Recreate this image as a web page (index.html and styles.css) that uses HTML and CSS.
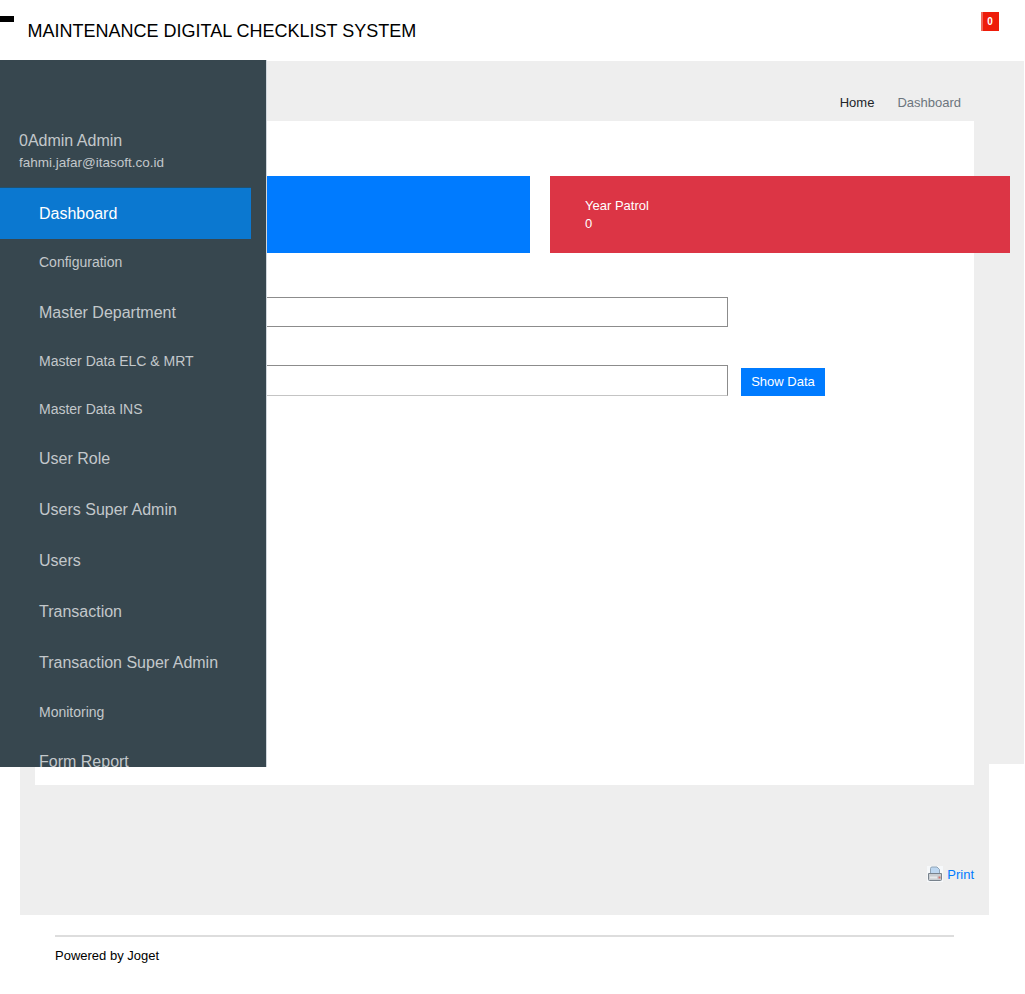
FILE: index.html
```html
<!DOCTYPE html>
<html lang="en">
<head>
<meta charset="utf-8">
<title>Maintenance Digital Checklist System</title>
<link rel="stylesheet" href="styles.css">
</head>
<body>
<header class="topbar">
  <span class="toggle"></span>
  <h1 class="brand">MAINTENANCE DIGITAL CHECKLIST SYSTEM</h1>
  <span class="badge">0</span>
</header>
<div class="stage">
  <div class="backdrop"></div>
  <aside class="sidebar">
    <div class="user">
      <div class="user-name">0Admin Admin</div>
      <div class="user-mail">fahmi.jafar@itasoft.co.id</div>
    </div>
    <nav class="menu">
      <a class="item active">Dashboard</a>
      <a class="item small">Configuration</a>
      <a class="item nudge">Master Department</a>
      <a class="item small">Master Data ELC &amp; MRT</a>
      <a class="item small">Master Data INS</a>
      <a class="item">User Role</a>
      <a class="item">Users Super Admin</a>
      <a class="item">Users</a>
      <a class="item">Transaction</a>
      <a class="item">Transaction Super Admin</a>
      <a class="item small">Monitoring</a>
      <a class="item">Form Report</a>
    </nav>
  </aside>
  <main class="main">
    <div class="crumbs"><a class="crumb-home">Home</a><span class="crumb-here">Dashboard</span></div>
    <section class="panel">
      <div class="cards">
        <div class="card blue"></div>
        <div class="card red"><div>Year Patrol</div><div>0</div></div>
      </div>
      <div class="field"><input class="input" type="text"></div>
      <div class="field second">
        <input class="input" type="text">
        <button class="show" type="button">Show Data</button>
      </div>
    </section>
    <div class="print-row">
      <a class="print">
        <svg class="print-icon" width="16" height="16" viewBox="0 0 16 16" aria-hidden="true">
          <rect x="0" y="0" width="16" height="16" fill="#f6f8fa"/>
          <path d="M3.5 7.5V2.5Q3.5 1 5 1h5L12.5 3.5v4z" fill="#bcd6f0" stroke="#8fa3b5"/>
          <path d="M1.5 7.5h13v6q0 1-1 1h-11q-1 0-1-1z" fill="#c9cdd1" stroke="#78828c"/>
          <rect x="3" y="10.5" width="7" height="2" fill="#e6e8ea"/>
          <rect x="11.5" y="10.5" width="2" height="2" fill="#d0736c"/>
        </svg>Print</a>
    </div>
  </main>
</div>
<footer class="footer">Powered by Joget</footer>
</body>
</html>
```
FILE: styles.css
```css
* { box-sizing: border-box; }
html, body { margin: 0; padding: 0; }
body {
  font-family: "Liberation Sans", Arial, sans-serif;
  font-size: 13px;
  color: #000;
  background: #fff;
  overflow: hidden;
  height: 994px;
}
.topbar {
  height: 61px;
  display: flex;
  align-items: flex-start;
  position: relative;
}
.toggle { width: 14px; height: 6px; margin-top: 16px; background: #000; }
.brand {
  margin: 19px 0 0 13.5px;
  font-size: 18px;
  line-height: 24px;
  font-weight: 400;
}
.badge {
  margin: 12px 26px 0 auto;
  width: 18px;
  height: 19px;
  background: #ee1c0a;
  box-shadow: inset 2px 0 0 #f0685a;
  color: #fff;
  font-size: 10px;
  font-weight: 700;
  line-height: 19px;
  text-align: center;
}
.stage { position: relative; }
.backdrop {
  position: absolute;
  top: 0;
  left: 0;
  width: 1024px;
  height: 703px;
  background: #eee;
}
.sidebar {
  position: absolute;
  z-index: 2;
  top: -1px;
  left: 0;
  width: 267px;
  height: 707px;
  background: #37474f;
  border-right: 1px solid #cfd6dc;
  overflow: hidden;
}
.user { padding: 70px 0 0 19px; height: 127px; color: #c3c8cb; }
.user-name { font-size: 16px; line-height: 22px; }
.user-mail { font-size: 13.5px; line-height: 22px; }
.menu { display: flex; flex-direction: column; }
.item {
  display: block;
  width: 251px;
  padding: 13.5px 0 13.5px 39px;
  font-size: 16px;
  line-height: 24px;
  color: #c3c8cb;
  white-space: nowrap;
}
.item.small { font-size: 14px; line-height: 21px; }
.item.nudge { padding: 14.5px 0 12.5px 39px; }
.item.active {
  background: #0b78d0;
  border-top: 1px solid #20516f;
  margin-bottom: -1px;
  color: #fff;
}
.main {
  position: relative;
  margin: 0 36px 0 20px;
  padding: 0 15px;
  height: 854px;
  background: #eee;
}
.crumbs {
  height: 60px;
  padding: 34px 13px 0 0;
  display: flex;
  justify-content: flex-end;
  gap: 23px;
  line-height: 15px;
}
.crumb-home { color: #212529; }
.crumb-here { color: #6c757d; }
.panel {
  height: 664px;
  padding: 55px 0 0 35px;
  background: #fff;
}
.cards { display: flex; gap: 20px; width: 940px; }
.card {
  flex: 0 0 460px;
  height: 77px;
  padding: 21px 35px;
  color: #fff;
  line-height: 18px;
}
.blue { background: #007bff; }
.red { background: #dc3545; }
.field {
  display: flex;
  align-items: flex-end;
  gap: 13px;
  margin-top: 44px;
}
.field.second { margin-top: 38px; }
.input {
  display: block;
  width: 658px;
  height: 30px;
  padding: 0;
  margin: 0;
  border: 1px solid #8c8c8c;
  background: #fff;
}
.field.second .input { height: 31px; border-bottom-color: #c4c4c4; }
.show {
  width: 84px;
  height: 28px;
  padding: 0;
  border: 0;
  background: #007bff;
  color: #fff;
  font: 13px/28px "Liberation Sans", Arial, sans-serif;
}
.print-row {
  display: flex;
  justify-content: flex-end;
  padding-top: 82px;
}
.print {
  display: flex;
  align-items: center;
  gap: 4px;
  color: #007bff;
  line-height: 16px;
}
.print-icon { display: block; margin-top: -2px; }
.footer {
  margin: 20px 71px 0 55px;
  padding-top: 11px;
  border-top: 2px solid #ddd;
  line-height: 15px;
}
```
